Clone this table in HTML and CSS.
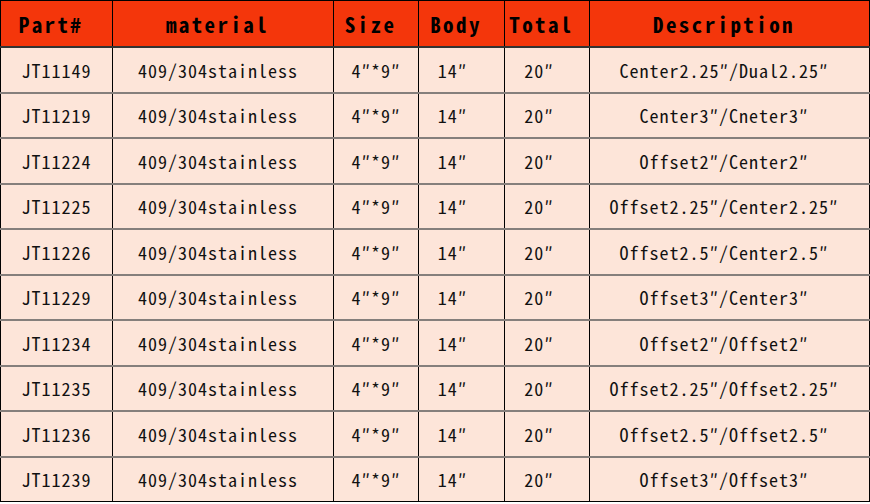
FILE: index.html
```html
<!DOCTYPE html>
<html>
<head>
<meta charset="utf-8">
<link rel="stylesheet" href="styles.css">
</head>
<body>
<table class="spec">
  <colgroup>
    <col class="c-part"><col class="c-mat"><col class="c-size"><col class="c-body"><col class="c-total"><col class="c-desc">
  </colgroup>
  <thead>
    <tr class="head">
      <th>Part#</th><th>material</th><th>Size</th><th>Body</th><th>Total</th><th>Description</th>
    </tr>
  </thead>
  <tbody>
    <tr><td>JT11149</td><td class="mat">409/304stainless</td><td>4″*9″</td><td class="len">14″</td><td class="tot">20″</td><td class="desc">Center2.25″/Dual2.25″</td></tr>
    <tr><td>JT11219</td><td class="mat">409/304stainless</td><td>4″*9″</td><td class="len">14″</td><td class="tot">20″</td><td class="desc">Center3″/Cneter3″</td></tr>
    <tr><td>JT11224</td><td class="mat">409/304stainless</td><td>4″*9″</td><td class="len">14″</td><td class="tot">20″</td><td class="desc">Offset2″/Center2″</td></tr>
    <tr><td>JT11225</td><td class="mat">409/304stainless</td><td>4″*9″</td><td class="len">14″</td><td class="tot">20″</td><td class="desc">Offset2.25″/Center2.25″</td></tr>
    <tr><td>JT11226</td><td class="mat">409/304stainless</td><td>4″*9″</td><td class="len">14″</td><td class="tot">20″</td><td class="desc">Offset2.5″/Center2.5″</td></tr>
    <tr><td>JT11229</td><td class="mat">409/304stainless</td><td>4″*9″</td><td class="len">14″</td><td class="tot">20″</td><td class="desc">Offset3″/Center3″</td></tr>
    <tr><td>JT11234</td><td class="mat">409/304stainless</td><td>4″*9″</td><td class="len">14″</td><td class="tot">20″</td><td class="desc">Offset2″/Offset2″</td></tr>
    <tr><td>JT11235</td><td class="mat">409/304stainless</td><td>4″*9″</td><td class="len">14″</td><td class="tot">20″</td><td class="desc">Offset2.25″/Offset2.25″</td></tr>
    <tr><td>JT11236</td><td class="mat">409/304stainless</td><td>4″*9″</td><td class="len">14″</td><td class="tot">20″</td><td class="desc">Offset2.5″/Offset2.5″</td></tr>
    <tr class="last"><td>JT11239</td><td class="mat">409/304stainless</td><td>4″*9″</td><td class="len">14″</td><td class="tot">20″</td><td class="desc">Offset3″/Offset3″</td></tr>
  </tbody>
</table>
</body>
</html>
```

FILE: styles.css
```css
html, body {
  margin: 0;
  padding: 0;
  background: #ffffff;
}

.spec {
  border-collapse: collapse;
  table-layout: fixed;
  width: 869px;
  font-family: "Noto Sans Mono CJK SC", "Liberation Mono", monospace;
  color: #111;
}

.c-part { width: 112px; }
.c-mat { width: 221px; }
.c-size { width: 85px; }
.c-body { width: 86px; }
.c-total { width: 85px; }
.c-desc { width: 280px; }

.spec th,
.spec td {
  padding: 0;
  text-align: center;
  vertical-align: middle;
  border-left: 1px solid #000;
  border-right: 1px solid #000;
  white-space: nowrap;
  overflow: hidden;
}

.head th {
  height: 45px;
  padding-right: 11px;
  background: #f4360b;
  border-top: 1px solid #000;
  border-bottom: 2px solid #333;
  font-size: 21px;
  font-weight: bold;
  letter-spacing: 2.4px;
  color: #000;
}

.spec td {
  height: 43.5px;
  background: #fde5d9;
  border-bottom: 2px solid #857f7c;
  font-size: 18px;
  letter-spacing: 1px;
  font-weight: 300;
}

.spec td.mat { padding-right: 10px; }
.spec td.len { padding-right: 18px; }
.spec td.tot { padding-right: 16px; }
.spec td.desc { padding-right: 11px; }

.spec tr.last td {
  border-bottom: 1px solid #000;
}
```
